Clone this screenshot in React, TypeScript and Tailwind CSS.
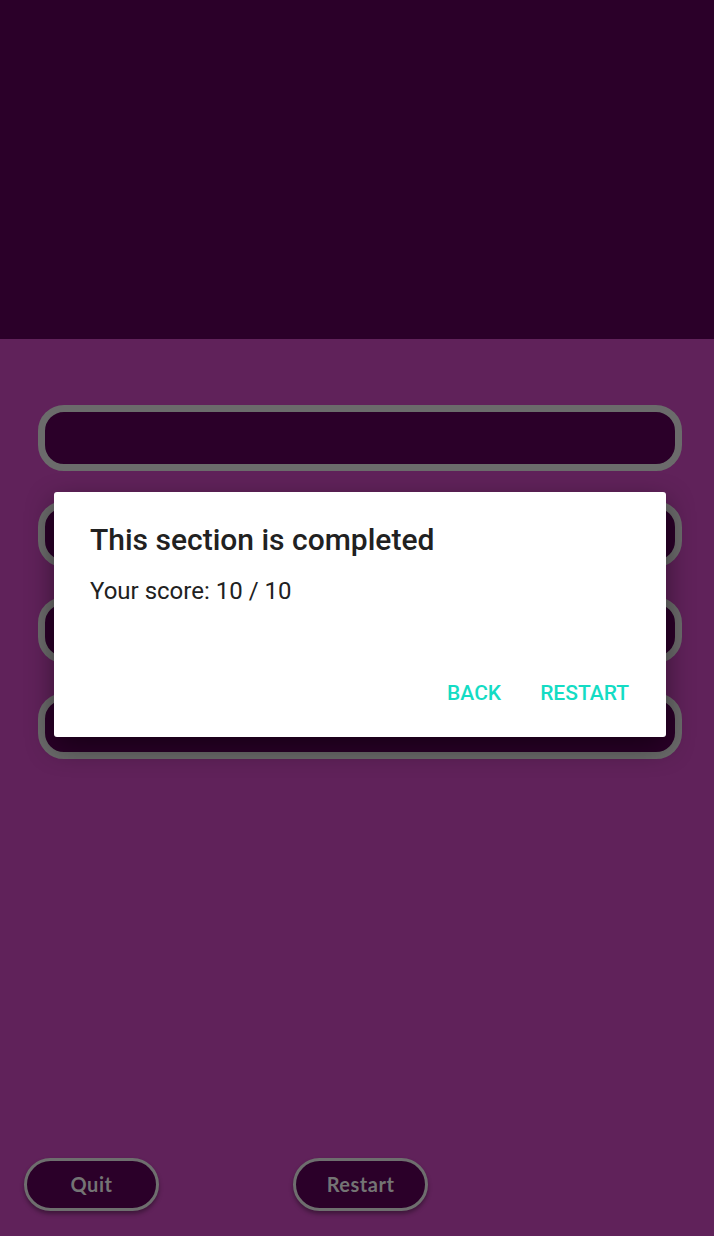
import React from "react";

const OPTIONS = [0, 1, 2, 3];

function OptionSlot() {
  return (
    <div className="h-[66px] rounded-[26px] border-[7px] border-[#6b6b6b] bg-[#2b0029]" />
  );
}

function PillButton({ label }: { label: string }) {
  return (
    <button className="flex h-[53px] w-[135px] items-center justify-center rounded-[27px] border-[3px] border-[#6e6e6e] bg-[#2b0029] pb-[2px] text-[20px] font-bold tracking-[0.5px] text-[#747474] shadow-[0_3px_4px_rgba(0,0,0,0.35)] [font-family:Lato,'Noto_Sans',sans-serif]">
      {label}
    </button>
  );
}

export default function App() {
  return (
    <div className="relative flex h-[1236px] w-full flex-col overflow-hidden bg-[#60225a] [font-family:Roboto,'Noto_Sans',sans-serif]">
      <div className="h-[339px] shrink-0 bg-[#2b0029]" />

      <div className="flex flex-col gap-[30px] pl-[38px] pr-[32px] pt-[66px]">
        {OPTIONS.map((i) => (
          <OptionSlot key={i} />
        ))}
      </div>

      <div className="mt-auto flex gap-[134px] pb-[25px] pl-[24px]">
        <PillButton label="Quit" />
        <PillButton label="Restart" />
      </div>

      {/* completion dialog */}
      <div className="absolute left-[54px] top-[492px] flex h-[245px] w-[612px] flex-col rounded-[3px] bg-white px-[36px] pt-[29px] shadow-[0_10px_28px_rgba(0,0,0,0.45)]">
        <h2 className="text-[30px] font-medium leading-[38px] text-[#212121]">
          This section is completed
        </h2>
        <p className="mt-[17px] text-[24px] leading-[30px] text-[#212121]">
          Your score: 10 / 10
        </p>
        <div className="mt-auto mb-[28px] flex justify-end gap-[39px] pr-[1px]">
          <button className="text-[21px] font-medium text-[#14dcc4]">BACK</button>
          <button className="text-[21px] font-medium text-[#14dcc4]">RESTART</button>
        </div>
      </div>
    </div>
  );
}
